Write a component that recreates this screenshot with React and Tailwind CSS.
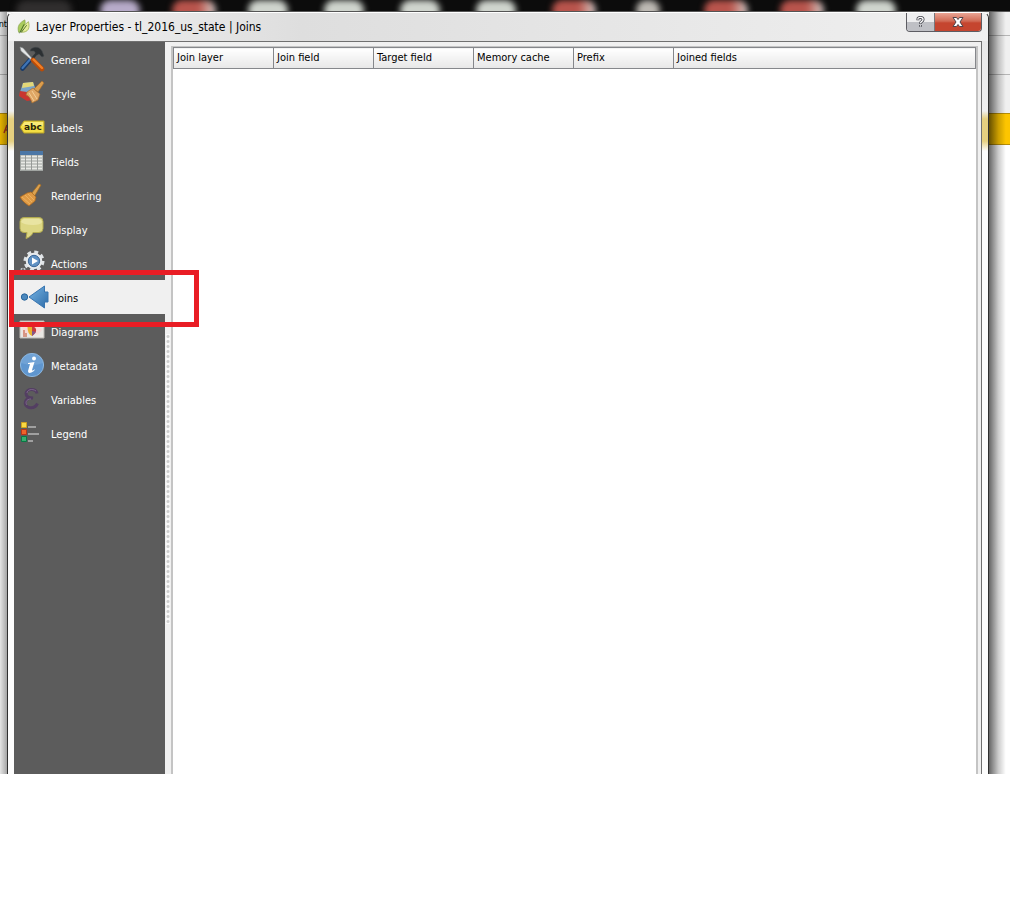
import React from "react";

const ICONS = {
  General: (
    <svg width="26" height="26" viewBox="0 0 26 26">
      <path d="M12 3c4-3 9-2 11 2l2 5-2 1-3-3-2 1-3-4-4 0z" fill="#2c3033" stroke="#454a4e" strokeWidth=".6" />
      <path d="M18 7L12 14" stroke="#2f3437" strokeWidth="2.600" />
      <path d="M11 14L3.500 22.500" stroke="#183a68" strokeWidth="4.600" strokeLinecap="round" />
      <path d="M11 13.500L3.500 22" stroke="#3f74b5" strokeWidth="2.200" strokeLinecap="round" />
      <path d="M1 1l3 1 9.500 11-1 1L2 5z" fill="#e4e6e6" stroke="#8b8f90" strokeWidth=".6" />
      <path d="M14 14l9 9" stroke="#b94c08" strokeWidth="4.600" strokeLinecap="round" />
      <path d="M14.500 13.500l8.500 8.500" stroke="#f07f27" strokeWidth="2.400" strokeLinecap="round" />
    </svg>
  ),
  Style: (
    <svg width="26" height="26" viewBox="0 0 26 26">
      <path d="M4 3l10-1 3 8-4 6-12-4z" fill="#7ba5c9" />
      <path d="M1 11l7 1 6 8-6 1-8-5z" fill="#c93630" />
      <path d="M4 3l10-1 1 4-12 2z" fill="#e3d777" />
      <path d="M8 12l6-4 7 6-2 6-6 3c-1-4-3-7-6-8z" fill="#dfa665" stroke="#a96d2d" strokeWidth=".7" />
      <path d="M10 13l5 8M13 11l5 8" stroke="#f4ce96" strokeWidth="1" />
      <path d="M15 9l8-8 2 2-6 9z" fill="#db9d4d" stroke="#a66b2a" strokeWidth=".6" />
    </svg>
  ),
  Labels: (
    <svg width="26" height="26" viewBox="0 0 26 26">
      <path d="M1 13l4-6h20v12H5z" fill="#f3de43" stroke="#b8a126" strokeWidth="1" />
      <path d="M5.500 8H24v4H3z" fill="#fbf08b" opacity=".7" />
      <text x="5" y="16" fontFamily="'DejaVu Sans', sans-serif" fontWeight="bold" fontSize="9" fill="#28260d">abc</text>
    </svg>
  ),
  Fields: (
    <svg width="26" height="26" viewBox="0 0 26 26">
      <path d="M1 3h23v20H1z" fill="#b4b8b5" />
      <path d="M1 3h23v4H1z" fill="#4c77a6" />
      <path d="M2 8.500h21M2 11.500h21M2 14.500h21M2 17.500h21M2 20.500h21" stroke="#e9eae6" strokeWidth="1.500" />
      <path d="M6.500 7v16M12.500 7v16M18.500 7v16" stroke="#979b98" strokeWidth="1" />
      <path d="M1.500 7v15.500H24" fill="none" stroke="#a0a4a1" strokeWidth="1" />
    </svg>
  ),
  Rendering: (
    <svg width="26" height="26" viewBox="0 0 26 26">
      <path d="M12 12L20 2l2 1-7 12z" fill="#dba250" stroke="#a56a20" strokeWidth=".7" />
      <path d="M8 11l4-1 5 5-1 4-6 5C7 22 3 19 1 15z" fill="#df9a45" stroke="#aa651b" strokeWidth=".7" />
      <path d="M3 15l8 7M6 13l7 7M9 12l6 6" stroke="#f0b765" strokeWidth=".8" />
    </svg>
  ),
  Display: (
    <svg width="26" height="26" viewBox="0 0 26 26">
      <path d="M5 1.500h15q4 0 4 4v7q0 4-4 4h-6c-1 3-4 5-7 6l1-6H5q-4 0-4-4v-7q0-4 4-4z" fill="#ddd784" stroke="#b1aa50" />
      <path d="M5 3h15q2 0 3 3-1 3-9 3-9 0-12-3 1-3 3-3z" fill="#f2edb5" opacity=".6" />
    </svg>
  ),
  Actions: (
    <svg width="26" height="26" viewBox="0 0 26 26">
      <circle cx="15" cy="11" r="8.500" fill="none" stroke="#dfe3e6" strokeWidth="4" strokeDasharray="3.675 3" />
      <circle cx="15" cy="11" r="8.300" fill="#e7eaec" />
      <circle cx="15" cy="11" r="5.700" fill="#5f91c3" stroke="#3b6899" />
      <path d="M13 7.500l6 3.500-6 3.500z" fill="#fff" />
      <circle cx="4" cy="21" r="2.500" fill="none" stroke="#c9ced2" strokeWidth="1.500" strokeDasharray="2 1" />
    </svg>
  ),
  Joins: (
    <svg width="30" height="26" viewBox="0 0 30 26">
      <defs>
        <linearGradient id="join-blue" x2="1" y2="1">
          <stop stopColor="#78b6e6" /><stop offset="1" stopColor="#2d6ba7" />
        </linearGradient>
      </defs>
      <circle cx="5.500" cy="13" r="3.200" fill="#4b88bd" stroke="#28659c" />
      <path d="M10 13L25.500 2v6H29v10h-3.500v6z" fill="url(#join-blue)" stroke="#3976b1" strokeWidth="1" />
    </svg>
  ),
  Diagrams: (
    <svg width="26" height="26" viewBox="0 0 26 26">
      <path d="M1 3h24v17H1z" fill="#e9e7e3" stroke="#bab7b1" />
      <path d="M3 5l8 2 4-3 8 8-4 5-8-3-7 3z" fill="#f7d9d6" />
      <path d="M8.500 9H13v9q-4.500-2-4.500-9z" fill="#e8b02c" />
      <path d="M13 8.500c5 0 6 6 0 9.500z" fill="#c93c3a" />
      <path d="M13 13l4 1-4 4z" fill="#81588c" />
      <path d="M5 12v7M7 15v4" stroke="#cf7d67" strokeWidth="1.500" />
    </svg>
  ),
  Metadata: (
    <svg width="26" height="26" viewBox="0 0 26 26">
      <circle cx="13" cy="13" r="11.600" fill="#5f96cf" stroke="#8cb7df" />
      <path d="M2 11a11 10 0 0122 0q-10 4-22 0" fill="#8ab4df" opacity=".4" />
      <circle cx="15" cy="6.500" r="2" fill="#fff" />
      <path d="M9 11l6.500-1-2.500 8q0 1.500 3-1l-1 2q-6 4-6 0l2-7H9z" fill="#fff" />
    </svg>
  ),
  Variables: (
    <svg width="26" height="26" viewBox="0 0 26 26">
      <path d="M18 7.500C17 2 7 2.500 7 7.500c0 3 3 4.500 7 4.500-9-1-10 8-4 9.500 4 1 7-1 8.500-4" fill="none" stroke="#533e62" strokeWidth="3" />
      <path d="M17 5C13 2 8 4 8 7m4 6c-5 0-6 4-4 6" fill="none" stroke="#866d94" strokeWidth=".8" />
    </svg>
  ),
  Legend: (
    <svg width="26" height="26" viewBox="0 0 26 26">
      <path d="M9 7h8M9 14h11M9 21h5" stroke="#a0a0a0" strokeWidth="2" />
      <path d="M2.500 2.500h5v5h-5z" fill="#f8d943" stroke="#d0a01f" />
      <path d="M2.500 9.500h5v5h-5z" fill="#ee632b" stroke="#b93516" />
      <path d="M2.500 16.500h5v5h-5z" fill="#38ad70" stroke="#087844" />
    </svg>
  ),
};

const TASKBAR = [
  ["w-14 bg-[#302e2e]", "ml-4"],
  ["w-10 bg-[#b7abc9]", "ml-7"],
  ["w-11 bg-linear-to-r from-[#b8544c] from-60% to-[#cccccc]", "ml-8"],
  ["w-10 bg-[#cfd4cd]", "ml-8"],
  ["w-10 bg-[#cfd4cd]", "ml-9"],
  ["w-10 bg-[#cfd4cd]", "ml-9"],
  ["w-10 bg-[#cfd4cd]", "ml-9"],
  ["w-11 bg-linear-to-r from-[#b8544c] from-60% to-[#cccccc]", "ml-9"],
  ["w-6 bg-[#bdb9b3]", "ml-10"],
  ["w-11 bg-linear-to-r from-[#b8544c] from-60% to-[#cccccc]", "ml-11"],
  ["w-11 bg-linear-to-r from-[#b8544c] from-60% to-[#cccccc]", "ml-8"],
  ["w-10 bg-[#cfd4cd]", "ml-8"],
];

const COLUMNS = ["Join layer", "Join field", "Target field", "Memory cache", "Prefix", "Joined fields"];

function Taskbar() {
  return (
    <div className="flex h-3 shrink-0 overflow-hidden border-b border-[#555] bg-[#0c0c0c]">
      {TASKBAR.map(([look, space], i) => (
        <div key={i} className={`h-5 shrink-0 rounded-full blur-[3px] ${look} ${space}`} />
      ))}
    </div>
  );
}

function TitleBar() {
  return (
    <header className="flex h-7 shrink-0 items-start justify-between rounded-t-[6px] bg-linear-to-r from-[#f4f4f4] via-[#dedede] via-30% to-[#f0f0f0]">
      <div className="flex h-7 items-center gap-1 pl-2">
        <svg width="16" height="16" viewBox="0 0 16 18" aria-hidden="true">
          <path d="M2 15C0 8 3 4 9 1c1 6 0 11-7 14z" fill="#a9cb5c" stroke="#7d9c3c" strokeWidth=".7" />
          <path d="M5 15C6 9 9 6 13 3c2 7 0 12-8 12z" fill="#e4ec9a" stroke="#87a237" strokeWidth=".7" />
          <path d="M3 16L8 6M5 15l6-8" stroke="#3f6722" strokeWidth="1" />
        </svg>
        <h1 className="text-[12px] leading-4 text-black">Layer Properties - tl_2016_us_state | Joins</h1>
      </div>
      <div className="mr-[6px] flex h-[19px] overflow-hidden rounded-b-[4px] border border-t-0 border-[#5d5d63]">
        <button type="button" aria-label="Help" className="flex w-7 items-center justify-center border-r border-[#77777c] bg-linear-to-b from-[#eeeeef] from-50% to-[#bfc0c5] to-50%">
          <svg width="9" height="12" viewBox="0 0 10 14">
            <path d="M2 5V3.500C2 1 8 1 8 4c0 2.500-3 2-3 5m0 1.500v2" fill="none" stroke="#45454d" strokeWidth="3.400" />
            <path d="M2 4.500V3.500C2 1 8 1 8 4c0 2.500-3 2-3 4.600m0 2.200v1.400" fill="none" stroke="#fff" strokeWidth="1.500" />
          </svg>
        </button>
        <button type="button" aria-label="Close" className="flex w-[46px] items-center justify-center bg-linear-to-b from-[#e9a494] via-[#d06a55] via-45% to-[#c5452f] to-55%">
          <svg width="14" height="12" viewBox="0 0 14 12">
            <path d="M2 1.500h3.500L7 3.500l1.500-2H12L9 6l3 4.500H8.500L7 8.500l-1.500 2H2L5 6z" fill="#fff" stroke="#51434a" />
          </svg>
        </button>
      </div>
    </header>
  );
}

function Sidebar() {
  return (
    <nav aria-label="Layer property pages" className="w-[151px] shrink-0 bg-[#5c5c5c]">
      <ul>
        {Object.entries(ICONS).map(([name, icon]) => {
          const active = name === "Joins";
          return (
            <li key={name} className={active ? "relative z-10" : ""}>
              <button
                type="button"
                aria-current={active ? "page" : undefined}
                className={`flex h-[34px] w-full items-center gap-[6px] pl-[5px] text-left text-[11px] leading-4 ${active ? "bg-[#f0f0f0] text-black" : "text-white"}`}
              >
                <span className="shrink-0" aria-hidden="true">{icon}</span>
                <span className="pt-[3px]">{name}</span>
              </button>
              {active && (
                <div className="pointer-events-none absolute -top-[10px] -left-[5px] h-[57px] w-[190px] border-5 border-[#e91d25]" />
              )}
            </li>
          );
        })}
      </ul>
    </nav>
  );
}

function JoinTable() {
  return (
    <section className="min-w-0 flex-1 border-x-2 border-t border-[#c4c4c4] bg-white">
      <table className="w-full table-fixed border-collapse text-[11px] leading-4">
        <thead>
          <tr>
            {COLUMNS.map((name, i) => (
              <th
                key={name}
                className={`h-[21px] border border-[#85878b] bg-linear-to-b from-white to-[#e7e7e7] p-0 pl-[3px] text-left font-normal ${i < 5 ? "w-[100px]" : ""}`}
              >
                {name}
              </th>
            ))}
          </tr>
        </thead>
        <tbody />
      </table>
    </section>
  );
}

function Backdrop({ side }) {
  const left = side === "left";
  return (
    <div aria-hidden="true" className={`relative flex shrink-0 flex-col overflow-hidden bg-white text-[9px] leading-4 text-black ${left ? "w-[7px]" : "w-[21px]"}`}>
      <div className="flex h-[24px] justify-end border-b border-[#b5b5b5] bg-[#f0f0f0] pt-1">{left ? "nt" : ""}</div>
      <div className="h-[39px] border-b border-[#b5b5b5] bg-[#f0f0f0]" />
      <div className="h-[38px] bg-[#f0f0f0]" />
      <div className="flex h-8 items-center justify-end border-y border-[#b58d08] bg-[#fdc500]">
        {left && (
          <svg width="4" height="10" viewBox="0 0 4 10">
            <path d="M4 1L1 9M2 6h2" fill="none" stroke="#b5381c" strokeWidth="1.500" />
          </svg>
        )}
      </div>
      <div className={`absolute inset-0 ${left ? "bg-linear-to-r from-black/10 to-black/35" : "bg-linear-to-r from-black/60 via-black/20 via-45% to-transparent to-80%"}`} />
    </div>
  );
}

export default function App() {
  return (
    <div className="min-h-screen bg-white font-['DejaVu_Sans_Condensed','DejaVu_Sans',sans-serif]">
      <div className="flex min-h-[774px] flex-col">
        <Taskbar />
        <div className="flex flex-1 bg-[#f0f0f0]">
          <Backdrop side="left" />
          <main className="flex min-w-0 flex-1 flex-col rounded-t-[6px] border-x border-t border-t-white border-l-[#303030] border-r-[#303030] bg-[linear-gradient(to_bottom,#e6e6e6_0,#f0f0f0_98px,#e6d080_106px,#e6d080_128px,#fdfdfd_138px)]">
            <TitleBar />
            <div className="mr-[6px] ml-[6px] flex flex-1 border-t border-r border-[#707070] bg-[#f0f0f0]">
              <Sidebar />
              <div className="w-[6px] shrink-0 pl-px">
                <div className="mt-[292px] h-[290px] w-[4px] bg-[radial-gradient(circle,#cfcfcf_1px,#fafafa_2px)] bg-size-[4px_5px]" />
              </div>
              <div className="flex min-w-0 flex-1 pt-1 pr-[3px]">
                <JoinTable />
              </div>
            </div>
          </main>
          <Backdrop side="right" />
        </div>
      </div>
    </div>
  );
}
